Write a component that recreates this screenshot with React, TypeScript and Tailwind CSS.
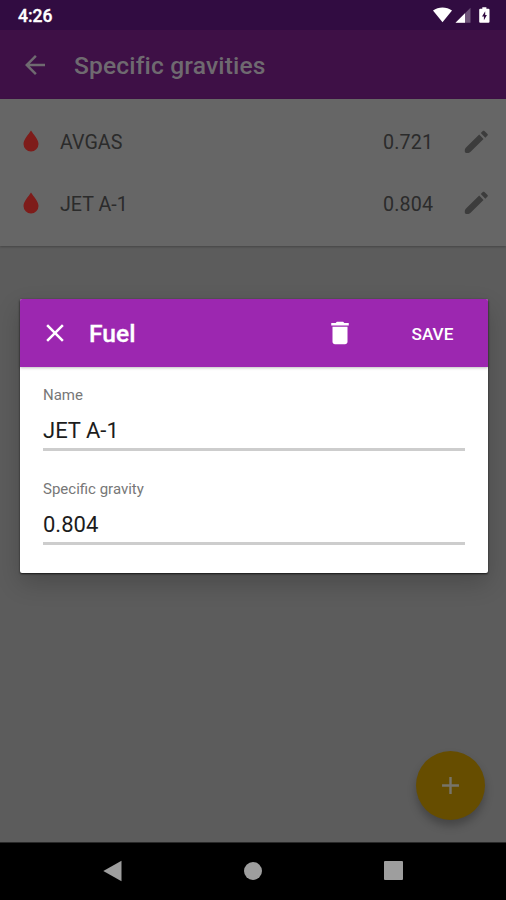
import type { ReactNode } from 'react';

const paths = {
  back: 'M20 11H7.83l5.59-5.59L12 4l-8 8 8 8 1.41-1.41L7.83 13H20v-2z',
  close: 'M19 6.41L17.59 5 12 10.59 6.41 5 5 6.41 10.59 12 5 17.59 6.41 19 12 13.41 17.59 19 19 17.59 13.41 12z',
  trash: 'M6 19c0 1.1.9 2 2 2h8c1.1 0 2-.9 2-2V7H6v12zM19 4h-3.5l-1-1h-5l-1 1H5v2h14V4z',
  plus: 'M19 13h-6v6h-2v-6H5v-2h6V5h2v6h6v2z',
};

function Icon({ d, className }: { d: string; className: string }) {
  return (
    <svg viewBox="0 0 24 24" fill="currentColor" className={`shrink-0 ${className}`}>
      <path d={d} />
    </svg>
  );
}

function Pencil() {
  return (
    <svg viewBox="0 0 30 30" fill="currentColor" className="ml-[-2px] size-[30px] shrink-0 text-[#3c3c3c]">
      <path d="M18.200 7.600l4.300 4.300L9.600 24.800c-1.100 1.100-2.400 1.400-4.100 1.200-1.200-.1-1.700-.6-1.700-1.700-.1-1.600.4-2.900 1.500-4z" />
      <path d="M19.800 6l2-2c.5-.5 1.100-.5 1.600 0l3.100 3.100c.5.5.5 1 0 1.500l-2.200 2.100z" />
    </svg>
  );
}

function StatusBar() {
  return (
    <div className="flex h-[30px] shrink-0 items-center bg-[#310c41] pr-[14px] pl-[18px] text-white">
      <span className="flex-1 text-[17.500px] leading-5 font-medium [-webkit-text-stroke:0.35px_white] pt-[2px]">4:26</span>
      <svg width="60" height="18" viewBox="0 0 60 18" fill="white">
        <path d="M1 4.6C6.5 .5 14.500.5 20 4.600L10.500 16.300Z" />
        <path d="M38.500 1.700V16.700H23.500Z" fillOpacity=".3" />
        <path d="M33 7.200V16.700H23.500Z" />
        <path
          fillRule="evenodd"
          d="M48.200 2.800h2.100V1.200h4.100v1.600h2.100a1 1 0 0 1 1 1v12a1 1 0 0 1-1 1h-8.300a1 1 0 0 1-1-1v-12a1 1 0 0 1 1-1zM53.200 5.200l-3.200 5.200h1.900v3.900l3-5.300h-1.700z"
        />
      </svg>
    </div>
  );
}

function FuelRow({ name, value }: { name: string; value: string }) {
  return (
    <div className="flex h-[61.500px] items-center pr-[15px] pl-[23px] text-[19.700px] text-[#2b2b2b]">
      <svg viewBox="0 0 16 22" className="mb-[1px] h-[22px] w-4 shrink-0 text-[#7e1c1a]" fill="currentColor">
        <path d="M8 .5C5.500 4.500.5 9.500.5 14a7.500 7.500 0 0 0 15 0C15.500 9.500 10.500 4.500 8 .5z" />
      </svg>
      <span className="ml-[21px] flex-1 pt-[3px]">{name}</span>
      <span className="w-[94px] shrink-0 pt-[3px] pl-[14px] tracking-[0.15px]">{value}</span>
      <Pencil />
    </div>
  );
}

function Field({ label, value }: { label: string; value: string }) {
  return (
    <div className="flex h-[93.500px] flex-col">
      <span className="h-5 text-[15px] leading-5 text-[#777]">{label}</span>
      <span className="mt-[13px] h-[26px] text-[22px] leading-[26px] text-[#1c1c1c]">{value}</span>
      <span className="mt-[4px] h-[3px] bg-[#cdcdcd]" />
    </div>
  );
}

function NavSlot({ children }: { children: ReactNode }) {
  return <div className="flex w-[140.500px] justify-center">{children}</div>;
}

export default function App() {
  return (
    <div className="relative flex h-[900px] w-[506px] flex-col overflow-hidden bg-[#5c5c5c] font-['Roboto',sans-serif]">
      <StatusBar />
      <header className="flex h-[69px] shrink-0 items-center bg-[#3e1046] pl-5 text-[#6f6a70]">
        <Icon d={paths.back} className="size-[30px]" />
        <h1 className="ml-6 pt-[3px] text-[24.600px] font-medium tracking-[0.150px]">Specific gravities</h1>
      </header>
      <section className="h-[147px] shrink-0 bg-[#666] pt-3 shadow-[0_1px_2px_rgba(0,0,0,0.25)]">
        <FuelRow name="AVGAS" value="0.721" />
        <FuelRow name="JET A-1" value="0.804" />
      </section>
      <main className="flex flex-1 items-end justify-end pr-[21px] pb-[22px]">
        <button className="flex size-[69px] items-center justify-center rounded-full bg-[#664d00] text-[#77746a] shadow-[0_6px_9px_rgba(0,0,0,0.25)]">
          <Icon d={paths.plus} className="size-[29px]" />
        </button>
      </main>
      <nav className="flex h-[58px] shrink-0 items-center justify-center border-t border-[#292929] bg-black pb-[2px]">
        <NavSlot>
          <svg width="19" height="22" viewBox="0 0 19 22" fill="#9e9e9e">
            <path d="M18.500.8v20.400L.3 11z" />
          </svg>
        </NavSlot>
        <NavSlot>
          <span className="size-[18px] rounded-full bg-[#9e9e9e]" />
        </NavSlot>
        <NavSlot>
          <span className="size-[19px] rounded-[1px] bg-[#9e9e9e]" />
        </NavSlot>
      </nav>

      <div className="absolute top-[299px] left-5 h-[274px] w-[467.500px] rounded-[2px] bg-white shadow-[0_1px_2px_rgba(0,0,0,0.7),0_10px_24px_rgba(0,0,0,0.2)]">
        <div className="flex h-[68px] items-center rounded-t-[2px] bg-[#9c27b0] pr-[33px] pl-5 text-white shadow-[0_1px_3px_rgba(0,0,0,0.25)]">
          <Icon d={paths.close} className="size-[30px]" />
          <h2 className="ml-[19px] flex-1 pt-[3px] text-[24.600px] font-medium [-webkit-text-stroke:0.3px_white]">Fuel</h2>
          <Icon d={paths.trash} className="size-[30px]" />
          <span className="ml-[57px] w-[43px] pt-[3px] text-[17.200px] font-medium">SAVE</span>
        </div>
        <div className="px-[23px] pt-[18px]">
          <Field label="Name" value="JET A-1" />
          <Field label="Specific gravity" value="0.804" />
        </div>
      </div>
    </div>
  );
}
